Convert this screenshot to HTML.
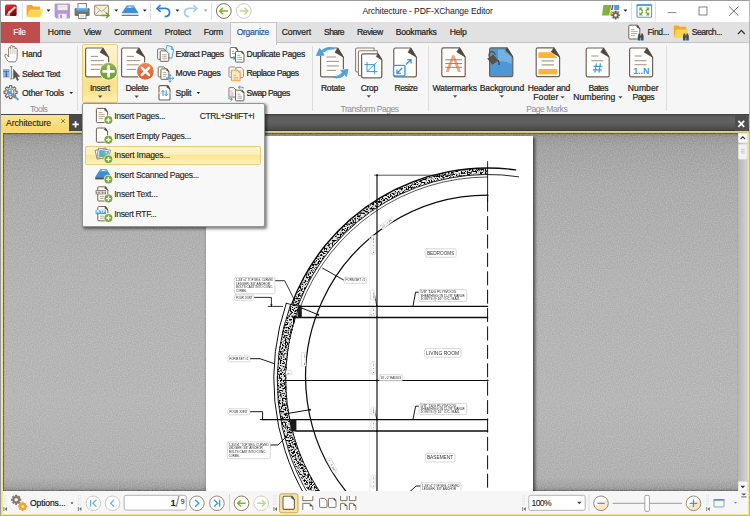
<!DOCTYPE html>
<html lang="en"><head><meta charset="utf-8"><title>Architecture - PDF-XChange Editor</title>
<style>
html,body{margin:0;padding:0;background:#fff;}
body{width:750px;height:516px;overflow:hidden;font-family:"Liberation Sans",sans-serif;}
#w{position:relative;width:750px;height:516px;overflow:hidden;background:#fff;}
#w div,#w svg{position:absolute;}
.t{-webkit-text-stroke:0.22px;white-space:pre;line-height:12px;height:12px;font-family:"Liberation Sans",sans-serif;}
.sep{width:1px;background:#dcdcdc;}
</style></head><body><div id="w">
<!-- title bar -->
<div style="left:0;top:0;width:750px;height:22px;background:#fff;"></div>
<!-- tab row -->
<div style="left:0;top:22px;width:750px;height:20px;background:#e1e1e1;"></div>
<div style="left:0;top:42px;width:750px;height:1px;background:#c4c4c4;"></div>
<div style="left:1px;top:22px;width:38.5px;height:20.5px;background:#be4d4d;"></div>
<!-- ribbon -->
<div style="left:0;top:43px;width:750px;height:71px;background:#f6f6f6;"></div>
<!-- active tab -->
<div style="left:229.5px;top:21.5px;width:45px;height:22px;background:#f6f6f6;border:1px solid #c4c4c4;border-bottom:none;box-sizing:content-box;"></div>
<!-- ribbon group separators -->
<div class="sep" style="left:77px;top:46px;height:65px;"></div>
<div class="sep" style="left:311.5px;top:46px;height:65px;"></div>
<div class="sep" style="left:428px;top:46px;height:65px;"></div>
<div class="sep" style="left:665.5px;top:46px;height:65px;"></div>
<!-- insert button active -->
<div style="left:82px;top:44px;width:36px;height:58.5px;box-sizing:border-box;border:1px solid #e8cf7e;border-radius:2px;background:linear-gradient(#fdf5d2,#fceaa6 50%,#fbe08a 68%,#fbe596 85%,#fdf0b8);"></div>
<!-- doc tab bar -->
<div style="left:0;top:114px;width:750px;height:17px;background:linear-gradient(#3f3f3f 0,#5d5d5d 2.5px,#626262 7px,#585858 12px,#4a4a4a 15.5px,#333 17px);"></div>

<!-- yellow frame -->
<div style="left:1px;top:131px;width:748px;height:384px;background:#f1e78a;"></div>
<div style="left:1px;top:131px;width:748px;height:2px;background:linear-gradient(#e6d077,#e9d47c 70%,#8a8050);"></div>
<div style="left:1px;top:115px;width:68px;height:18px;background:linear-gradient(#fbe391,#f9d870 80%,#f4dc80);"></div>
<!-- outer window border -->
<div style="left:0;top:0;width:750px;height:516px;box-sizing:border-box;border:1px solid #9c9c9c;border-right-color:#b5b5b5;border-bottom-color:#b5b5b5;z-index:50;pointer-events:none;"></div>
<!-- document area -->
<div id="doc" style="left:2.5px;top:133px;width:735.5px;height:358px;background:linear-gradient(#7c7c7c 0px,#949494 4px,#9e9e9e 14px,#a7a7a7 50px,#afafaf 150px,#b2b2b2 270px,#acacac 345px,#9c9c9c 354px,#858585 358px);overflow:hidden;box-shadow:inset 1px 1px 1px #555, inset 0 -1px 1px #6a6a6a;">
<svg style="left:0;top:0;opacity:0.5;" width="736" height="358"><filter id="grain" x="0" y="0" width="100%" height="100%"><feTurbulence type="fractalNoise" baseFrequency="0.85" numOctaves="1" seed="3"/><feColorMatrix type="matrix" values="0 0 0 0 1  0 0 0 0 1  0 0 0 0 1  0.9 0 0 0 -0.32"/></filter><rect width="736" height="358" filter="url(#grain)"/></svg>
</div>
<!-- page -->
<div style="left:206.4px;top:135.7px;width:327px;height:355.3px;background:#fff;box-shadow:1.5px 1px 3px 0.5px rgba(0,0,0,0.6);"></div>
<div style="left:2.5px;top:133px;width:735.5px;height:358px;overflow:hidden;">
<svg id="dwg" style="left:-2.5px;top:-133px;opacity:0.999;" width="750" height="516" viewBox="0 0 750 516" font-family="Liberation Sans, sans-serif">
<defs>
<clipPath id="pg"><rect x="206.4" y="135.7" width="327" height="355.3"/></clipPath>
<filter id="speck" x="0" y="0" width="100%" height="100%" filterUnits="userSpaceOnUse">
<feTurbulence type="fractalNoise" baseFrequency="0.62" numOctaves="2" seed="11" result="n"/>
<feColorMatrix in="n" type="matrix" values="0 0 0 0 0  0 0 0 0 0  0 0 0 0 0  6 0 0 0 -2.75" result="a"/>
<feComposite in="a" in2="SourceGraphic" operator="in"/>
</filter>
</defs>
<g clip-path="url(#pg)" fill="none" stroke="#0c0c0c" stroke-width="1" stroke-linecap="round">
<path d="M487.60 171.20A205.80 205.80 0 0 0 294.85 304.88" stroke="#e4e4e4" stroke-width="6.40" stroke-linecap="butt"/>
<path d="M487.60 171.20A205.80 205.80 0 0 0 294.85 304.88" stroke="#000" stroke-width="6.40" stroke-linecap="butt" filter="url(#speck)"/>
<path d="M515.70 169.90A209.00 209.00 0 0 0 291.58 304.50" stroke-width="1.3"/>
<path d="M518.60 176.79A202.60 202.60 0 0 0 297.85 306.00" stroke-width="0.9"/>
<path d="M487.60 177.00A200.00 200.00 0 0 0 300.63 306.00" stroke-width="0.7"/>
<path d="M487.60 195.00A182.00 182.00 0 0 0 349.04 495.00" stroke-width="1.25"/>
<path d="M295.50 305.20A207.10 207.10 0 0 0 317.27 496.00" stroke="#e4e4e4" stroke-width="9.4" stroke-linecap="butt"/>
<path d="M295.50 305.20A207.10 207.10 0 0 0 317.27 496.00" stroke="#000" stroke-width="9.4" stroke-linecap="butt" filter="url(#speck)"/>
<path d="M299.66 305.20A202.30 202.30 0 0 0 322.65 496.00" stroke-width="0.9"/>
<path d="M286.31 303.20A233.50 233.50 0 0 0 305.14 496.00" stroke-width="1.0"/>
<path d="M290.60 304.40A222.84 222.84 0 0 0 309.35 496.00" stroke-width="0.85"/>
<path d="M286.2 303.2L291 304.5L298 305" stroke-width="0.9"/>
<path d="M487.6 161.6V201.4" stroke-width="0.9"/>
<path d="M487.6 197.7V495" stroke-width="1" stroke-dasharray="14 4.4" stroke-linecap="butt"/>
<path d="M374.5 175.2H452" stroke-width="0.7"/>
<path d="M377 175.2V495" stroke-width="1.15"/>
<path d="M369.6 175.2V495" stroke="#e4e4e4" stroke-width="0.6"/>
<path d="M299.8 306.4H487.6M294.4 317.5H487.6" stroke-width="1.4"/>
<path d="M285 380.5H487.6" stroke-width="1.2"/>
<path d="M262.6 419.6H487.6M296 431H487.6" stroke-width="1.4"/>
<rect x="297.6" y="305.6" width="4.2" height="12" fill="#1a1a1a" stroke="none"/>
<rect x="290.4" y="419" width="6" height="12.4" fill="#1a1a1a" stroke="none"/>
<path d="M301.8 308L318.2 314.8" stroke-width="1"/><circle cx="318.2" cy="314.8" r="1" fill="#111" stroke="none"/>
<path d="M284.3 414L310 409.7" stroke-width="1"/><circle cx="310" cy="409.7" r="1" fill="#111" stroke="none"/>
<circle cx="377" cy="175.2" r="1" fill="#111" stroke="none"/>
<circle cx="377" cy="306.2" r="1" fill="#111" stroke="none"/>
<circle cx="377" cy="317.2" r="1" fill="#111" stroke="none"/>
<circle cx="377" cy="380.5" r="1" fill="#111" stroke="none"/>
<circle cx="377" cy="419.6" r="1" fill="#111" stroke="none"/>
<circle cx="377" cy="431" r="1" fill="#111" stroke="none"/>
<circle cx="487.6" cy="195.4" r="0.9" fill="#111" stroke="none"/>
<circle cx="487.6" cy="380.5" r="1" fill="#111" stroke="none"/>
<path d="M344 280.2L322.6 268.2" stroke-width="0.95"/>
<path d="M274.9 280.7H284.7L296 303" stroke-width="0.85"/>
<path d="M254 297.4H271.4V306.3M268.2 306.4H282.6" stroke-width="0.85"/><path d="M270.2 304.2H272.6L271.4 306.3Z" fill="#111" stroke="none"/>
<path d="M419 292.2H415.6L413 306" stroke-width="0.95"/>
<path d="M419 406.2H415.6L413 419.4" stroke-width="0.95"/>
<path d="M420.5 486H416L409.5 492" stroke-width="0.95"/>
<path d="M250 358.7H260L273.8 363.5" stroke-width="0.95"/>
<path d="M250 411.7H262.6V419.6M260.2 419.6H265" stroke-width="0.95"/>
<path d="M270.3 445H278L288.4 434.6" stroke-width="0.95"/>
<path d="M374.5 295L376.8 305.5" stroke-width="0.7"/>
<path d="M374.5 410L376.8 419" stroke-width="0.7"/>
<rect x="425.3" y="248.8" width="30.9" height="8.4" rx="1.6" fill="#fff" stroke="#bdbdbd" stroke-width="0.6"/><text x="426.9" y="254.62" font-size="4.5" fill="#333" stroke="none" textLength="27.5" lengthAdjust="spacingAndGlyphs">BEDROOMS</text>
<rect x="424.4" y="348.6" width="36.6" height="8.6" rx="1.6" fill="#fff" stroke="#bdbdbd" stroke-width="0.6"/><text x="426.0" y="354.52" font-size="4.5" fill="#333" stroke="none" textLength="33.2" lengthAdjust="spacingAndGlyphs">LIVING ROOM</text>
<rect x="425.3" y="453.3" width="29.7" height="8.7" rx="1.6" fill="#fff" stroke="#bdbdbd" stroke-width="0.6"/><text x="426.9" y="459.27" font-size="4.5" fill="#333" stroke="none" textLength="26.3" lengthAdjust="spacingAndGlyphs">BASEMENT</text>
<rect x="344.0" y="277.3" width="22.8" height="6.0" rx="1.6" fill="#fff" stroke="#bdbdbd" stroke-width="0.6"/><text x="345.6" y="281.31" font-size="2.8" fill="#222" stroke="none" textLength="19.6" lengthAdjust="spacingAndGlyphs">FORM SET #1</text>
<rect x="234.4" y="277.5" width="40.5" height="16.2" rx="1.6" fill="#fff" stroke="#bdbdbd" stroke-width="0.6"/><text x="236.0" y="281.13" font-size="2.8" fill="#222" stroke="none" textLength="37.3" lengthAdjust="spacingAndGlyphs">1-3/4"x1" TOP SEG. CURVED</text><text x="236.0" y="284.78" font-size="2.8" fill="#222" stroke="none" textLength="34.0" lengthAdjust="spacingAndGlyphs">LEDGER; 3/8" ANCHOR</text><text x="236.0" y="288.43" font-size="2.8" fill="#222" stroke="none" textLength="37.3" lengthAdjust="spacingAndGlyphs">BOLTS CAST INTO CONC.</text><text x="236.0" y="292.08" font-size="2.8" fill="#222" stroke="none" textLength="10.8" lengthAdjust="spacingAndGlyphs">CORBEL</text>
<rect x="234.4" y="295.0" width="19.6" height="5.3" rx="1.6" fill="#fff" stroke="#bdbdbd" stroke-width="0.6"/><text x="236.0" y="298.66" font-size="2.8" fill="#222" stroke="none" textLength="16.4" lengthAdjust="spacingAndGlyphs">POUR JOINT</text>
<rect x="418.9" y="289.6" width="47.9" height="11.9" rx="1.6" fill="#fff" stroke="#bdbdbd" stroke-width="0.6"/><text x="420.5" y="293.12" font-size="2.8" fill="#222" stroke="none" textLength="35.8" lengthAdjust="spacingAndGlyphs">5/8" T&amp;G PLYWOOD</text><text x="420.5" y="296.56" font-size="2.8" fill="#222" stroke="none" textLength="44.7" lengthAdjust="spacingAndGlyphs">SHEATHING ON 11-7/8" MANUF.</text><text x="420.5" y="299.99" font-size="2.8" fill="#222" stroke="none" textLength="39.4" lengthAdjust="spacingAndGlyphs">JOISTS @ 16" O.C. MAX.</text>
<rect x="418.9" y="403.4" width="47.9" height="11.2" rx="1.6" fill="#fff" stroke="#bdbdbd" stroke-width="0.6"/><text x="420.5" y="406.81" font-size="2.8" fill="#222" stroke="none" textLength="35.8" lengthAdjust="spacingAndGlyphs">5/8" T&amp;G PLYWOOD</text><text x="420.5" y="410.01" font-size="2.8" fill="#222" stroke="none" textLength="44.7" lengthAdjust="spacingAndGlyphs">SHEATHING ON 11-7/8" MANUF.</text><text x="420.5" y="413.21" font-size="2.8" fill="#222" stroke="none" textLength="39.4" lengthAdjust="spacingAndGlyphs">JOISTS @ 16" O.C. MAX.</text>
<rect x="420.5" y="482.8" width="40.5" height="13.2" rx="1.6" fill="#fff" stroke="#bdbdbd" stroke-width="0.6"/><text x="422.1" y="486.54" font-size="2.8" fill="#222" stroke="none" textLength="37.3" lengthAdjust="spacingAndGlyphs">1-3/4"x1" TOP SEG. CURVED</text><text x="422.1" y="490.41" font-size="2.8" fill="#222" stroke="none" textLength="34.0" lengthAdjust="spacingAndGlyphs">LEDGER; 3/8" ANCHOR</text><text x="422.1" y="494.27" font-size="2.8" fill="#222" stroke="none" textLength="9.0" lengthAdjust="spacingAndGlyphs">BOLTS</text>
<rect x="379.0" y="374.8" width="23.7" height="6.0" rx="1.6" fill="#fff" stroke="#bdbdbd" stroke-width="0.6"/><text x="380.6" y="378.81" font-size="2.8" fill="#222" stroke="none" textLength="20.5" lengthAdjust="spacingAndGlyphs">18' - 0" RADIUS</text>
<rect x="228.0" y="355.8" width="22.0" height="6.0" rx="1.6" fill="#fff" stroke="#bdbdbd" stroke-width="0.6"/><text x="229.6" y="359.81" font-size="2.8" fill="#222" stroke="none" textLength="18.8" lengthAdjust="spacingAndGlyphs">FORM SET #2</text>
<rect x="228.0" y="408.8" width="22.0" height="6.0" rx="1.6" fill="#fff" stroke="#bdbdbd" stroke-width="0.6"/><text x="229.6" y="412.81" font-size="2.8" fill="#222" stroke="none" textLength="17.9" lengthAdjust="spacingAndGlyphs">POUR JOINT</text>
<rect x="227.2" y="441.9" width="43.1" height="16.8" rx="1.6" fill="#fff" stroke="#bdbdbd" stroke-width="0.6"/><text x="228.8" y="445.61" font-size="2.8" fill="#222" stroke="none" textLength="39.9" lengthAdjust="spacingAndGlyphs">1-3/4"x1" TOP SEG. CURVED</text><text x="228.8" y="449.41" font-size="2.8" fill="#222" stroke="none" textLength="34.0" lengthAdjust="spacingAndGlyphs">LEDGER; 3/8" ANCHOR</text><text x="228.8" y="453.21" font-size="2.8" fill="#222" stroke="none" textLength="37.6" lengthAdjust="spacingAndGlyphs">BOLTS CAST INTO CONC.</text><text x="228.8" y="457.01" font-size="2.8" fill="#222" stroke="none" textLength="10.8" lengthAdjust="spacingAndGlyphs">CORBEL</text>
<g transform="translate(387 223) rotate(-40)"><rect x="-7.5" y="-2.3" width="15" height="4.6" rx="1.3" fill="#fff" stroke="#c4c4c4" stroke-width="0.5"/><text x="-6.3" y="0.9" font-size="2.5" fill="#333" stroke="none" textLength="12.6" lengthAdjust="spacingAndGlyphs">20' - 0 3/8"</text></g>
<g transform="translate(373.2 245) rotate(-90)"><rect x="-9.5" y="-2.1" width="19" height="4.2" rx="1.3" fill="#fff" stroke="#c4c4c4" stroke-width="0.5"/><text x="-8.3" y="0.9" font-size="2.5" fill="#333" stroke="none" textLength="16.6" lengthAdjust="spacingAndGlyphs">1' - 7 3/8"</text></g>
<g transform="translate(372.6 295) rotate(-90)"><rect x="-5.0" y="-2.1" width="10" height="4.2" rx="1.3" fill="#fff" stroke="#c4c4c4" stroke-width="0.5"/><text x="-3.8" y="0.9" font-size="2.5" fill="#333" stroke="none" textLength="7.6" lengthAdjust="spacingAndGlyphs">3/4"</text></g>
<g transform="translate(373.2 311.8) rotate(-90)"><rect x="-4.0" y="-2.1" width="8" height="4.2" rx="1.3" fill="#fff" stroke="#c4c4c4" stroke-width="0.5"/><text x="-2.8" y="0.9" font-size="2.5" fill="#333" stroke="none" textLength="5.6" lengthAdjust="spacingAndGlyphs">1' - 0"</text></g>
<g transform="translate(373.2 368) rotate(-90)"><rect x="-6.5" y="-2.1" width="13" height="4.2" rx="1.3" fill="#fff" stroke="#c4c4c4" stroke-width="0.5"/><text x="-5.3" y="0.9" font-size="2.5" fill="#333" stroke="none" textLength="10.6" lengthAdjust="spacingAndGlyphs">8' - 0 1/2"</text></g>
<g transform="translate(373.2 411) rotate(-90)"><rect x="-4.0" y="-2.1" width="8" height="4.2" rx="1.3" fill="#fff" stroke="#c4c4c4" stroke-width="0.5"/><text x="-2.8" y="0.9" font-size="2.5" fill="#333" stroke="none" textLength="5.6" lengthAdjust="spacingAndGlyphs">3/4"</text></g>
<g transform="translate(373.2 425.3) rotate(-90)"><rect x="-4.0" y="-2.1" width="8" height="4.2" rx="1.3" fill="#fff" stroke="#c4c4c4" stroke-width="0.5"/><text x="-2.8" y="0.9" font-size="2.5" fill="#333" stroke="none" textLength="5.6" lengthAdjust="spacingAndGlyphs">1' - 0"</text></g>
<g transform="translate(373.2 481.5) rotate(-90)"><rect x="-6.5" y="-2.1" width="13" height="4.2" rx="1.3" fill="#fff" stroke="#c4c4c4" stroke-width="0.5"/><text x="-5.3" y="0.9" font-size="2.5" fill="#333" stroke="none" textLength="10.6" lengthAdjust="spacingAndGlyphs">8' - 0 1/2"</text></g>
<g transform="translate(303.6 359.5) rotate(-90)"><rect x="-7.0" y="-2.2" width="14" height="4.4" rx="1.3" fill="#fff" stroke="#c4c4c4" stroke-width="0.5"/><text x="-5.8" y="0.9" font-size="2.5" fill="#333" stroke="none" textLength="11.6" lengthAdjust="spacingAndGlyphs">6' - 0"</text></g>
<g transform="translate(288.8 372.6) rotate(0)"><rect x="-3.0" y="-2.2" width="6" height="4.4" rx="1.3" fill="#fff" stroke="#c4c4c4" stroke-width="0.5"/><text x="-1.8" y="0.9" font-size="2.5" fill="#333" stroke="none" textLength="3.6" lengthAdjust="spacingAndGlyphs">1"</text></g>
<g transform="translate(332 465.5) rotate(62)"><rect x="-8.0" y="-2.3" width="16" height="4.6" rx="1.3" fill="#fff" stroke="#c4c4c4" stroke-width="0.5"/><text x="-6.8" y="0.9" font-size="2.5" fill="#333" stroke="none" textLength="13.6" lengthAdjust="spacingAndGlyphs">7' - 1 1/4"</text></g>
</g>
</svg>
</div>
<!-- scrollbar -->
<div style="left:738px;top:133px;width:9.5px;height:358px;background:linear-gradient(90deg,#b4b4b4,#d6d6d6);"></div>
<svg style="left:0;top:0;" width="750" height="516" viewBox="0 0 750 516">
<defs><linearGradient id="ag" x1="0" y1="0" x2="0.6" y2="1"><stop offset="0" stop-color="#e8323a"/><stop offset="0.55" stop-color="#b31820"/><stop offset="1" stop-color="#6e0c10"/></linearGradient></defs>
<rect x="5" y="4.6" width="11.6" height="11.4" rx="1.6" fill="url(#ag)"/>
<path d="M7.4 14.2L8.6 11.4L14.6 6.2L16 7.8L10.2 13.2Z" fill="#fff"/><path d="M9.6 11.2L14.8 6.8M10.6 12.2L15.6 7.8" stroke="#c44" stroke-width="0.5"/><path d="M5.6 15.6L9 12.4L10.4 15.8Z" fill="#e8c8c8" opacity="0.9"/>

<path d="M22.3 2.5V20" stroke="#dcdcdc" stroke-width="1"/>
<path d="M150.6 2.5V20" stroke="#dcdcdc" stroke-width="1"/>
<path d="M211.4 2.5V20" stroke="#dcdcdc" stroke-width="1"/>
<path d="M631.6 2.5V20" stroke="#dcdcdc" stroke-width="1"/>
<path d="M655.4 2.5V20" stroke="#dcdcdc" stroke-width="1"/>
<path d="M26.6 6.2Q26.6 5 27.8 5H32L33.4 6.6H39Q40.2 6.6 40.2 7.8V16.4H26.6Z" fill="#f8a623"/>
<path d="M29.4 9.4H43.2L40.4 17H26.8Z" fill="#fdd655"/><path d="M30 10.2H42L41.7 11H29.7Z" fill="#fee58c"/>
<path d="M46.50 9.55H50.50L48.50 11.85Z" fill="#222"/>
<path d="M54.6 4.6Q54.6 3.6 55.6 3.6H69Q70 3.6 70 4.6V17.6Q70 18.6 69 18.6H56.4L54.6 16.8Z" fill="#b497d6"/>
<rect x="57.6" y="4.8" width="10" height="5.4" fill="#efefe4"/><path d="M58.6 6.8H66.6" stroke="#d9d9cc" stroke-width="0.8"/>
<rect x="58.4" y="13.8" width="8.2" height="4.8" fill="#f4f0fa"/><rect x="60" y="14.6" width="2" height="3.4" fill="#b497d6"/>
<rect x="78" y="3.6" width="8.4" height="5" fill="#fff" stroke="#7d6e60" stroke-width="0.9"/>
<rect x="74.6" y="8" width="15" height="8" rx="1.2" fill="#7d6e60"/><rect x="76.4" y="8" width="11.6" height="3.6" fill="#4a9fe0"/><rect x="76.4" y="8" width="11.6" height="1.4" fill="#78bcee"/>
<rect x="78.4" y="13.6" width="7.6" height="5" fill="#fff" stroke="#7d6e60" stroke-width="0.9"/><rect x="80" y="15" width="4.4" height="2.4" fill="#cfe8f6"/>
<rect x="94.6" y="5.2" width="14" height="10.2" rx="0.8" fill="#f7efd6" stroke="#8a7b6a" stroke-width="0.9"/><path d="M95 5.8L101.6 11.6L108.2 5.8M95 15L99.8 10.2M108.2 15L103.4 10.2" stroke="#a89a88" stroke-width="0.8" fill="none"/>
<path d="M101.4 15.4H108.4M106.2 12.8L109 15.4L106.2 18" stroke="#6aa820" stroke-width="1.5" fill="none"/>
<path d="M114.50 9.55H118.10L116.30 11.65Z" fill="#222"/>
<path d="M126.6 5.6H133.8L138.6 13.2H121.6Z" fill="#3f8fd6"/><path d="M126.8 5.8H133.6L135 8H125.4Z" fill="#6fb2ea"/><rect x="128.4" y="6.8" width="3" height="1" rx="0.5" fill="#fff"/>
<rect x="121.6" y="13.6" width="17" height="2" fill="#efe6da"/><path d="M121.6 15.4H138.6" stroke="#7d6e60" stroke-width="1.1"/>
<path d="M143.00 9.55H146.60L144.80 11.65Z" fill="#222"/>
<path d="M158.4 8.4H165.4Q169.6 8.8 169.6 12.6Q169.4 16.4 164.6 16.6" stroke="#2f7fd2" stroke-width="1.7" fill="none"/><path d="M160.6 5L157 8.4L160.6 11.8" stroke="#2f7fd2" stroke-width="1.7" fill="none"/>
<path d="M175.60 9.55H179.20L177.40 11.65Z" fill="#222"/>
<path d="M195.4 8.4H188.6Q184.6 8.8 184.6 12.6Q184.8 16.4 189.4 16.6" stroke="#a2cdf0" stroke-width="1.7" fill="none"/><path d="M193.4 5L197 8.4L193.4 11.8" stroke="#a2cdf0" stroke-width="1.7" fill="none"/>
<path d="M203.80 9.55H207.40L205.60 11.65Z" fill="#9a9a9a"/>
<circle cx="223.8" cy="11" r="7.4" fill="#fff" stroke="#7f7152" stroke-width="1"/><path d="M228 11H220M223 7.8L219.8 11L223 14.2" stroke="#7ab51d" stroke-width="1.5" fill="none"/>
<circle cx="243.8" cy="11" r="7.4" fill="#fff" stroke="#cfc8ba" stroke-width="1"/><path d="M239.6 11H247.6M244.6 7.8L247.8 11L244.6 14.2" stroke="#b7d98a" stroke-width="1.5" fill="none"/>
<path d="M603.4 5H611.6L609 15.6H602Z" fill="#7fb241"/><path d="M612.2 5H613.6L612.6 10H611Z" fill="#7a4aa8"/><rect x="614.2" y="5" width="5" height="5" fill="#4a9fe0"/><path d="M610.8 11H612.6L611.6 15.6H609.8Z" fill="#f7a428"/><rect x="614.2" y="10.6" width="5" height="1.6" fill="#f3b27a"/>
<path d="M619.74 14.51L619.74 15.89L618.51 15.92L618.17 16.75L619.02 17.64L618.04 18.62L617.15 17.77L616.32 18.11L616.29 19.34L614.91 19.34L614.88 18.11L614.05 17.77L613.16 18.62L612.18 17.64L613.03 16.75L612.69 15.92L611.46 15.89L611.46 14.51L612.69 14.48L613.03 13.65L612.18 12.76L613.16 11.78L614.05 12.63L614.88 12.29L614.91 11.06L616.29 11.06L616.32 12.29L617.15 12.63L618.04 11.78L619.02 12.76L618.17 13.65L618.51 14.48Z" fill="#6f6254" stroke="#6f6254" stroke-width="0.4" stroke-linejoin="round"/><circle cx="615.6" cy="15.2" r="1.5" fill="#fff" stroke="#6f6254" stroke-width="0.32000000000000006"/>
<path d="M623.50 9.50H627.30L625.40 11.70Z" fill="#222"/>
<rect x="637" y="5" width="14.6" height="12.2" rx="1" fill="#fff" stroke="#4a9fe0" stroke-width="1.1"/><rect x="636.5" y="4.2" width="15.6" height="1.8" fill="#4a9fe0"/>
<path d="M640.5 8.799999999999999L642.8 11.1" stroke="#76ab33" stroke-width="1.5"/><path d="M642.8 7.6H639.3V11.1Z" fill="#76ab33"/>
<path d="M648.0999999999999 8.799999999999999L645.8 11.1" stroke="#76ab33" stroke-width="1.5"/><path d="M645.8 7.6H649.3V11.1Z" fill="#76ab33"/>
<path d="M640.5 14.200000000000001L642.8 11.9" stroke="#76ab33" stroke-width="1.5"/><path d="M642.8 15.4H639.3V11.9Z" fill="#76ab33"/>
<path d="M648.0999999999999 14.200000000000001L645.8 11.9" stroke="#76ab33" stroke-width="1.5"/><path d="M645.8 15.4H649.3V11.9Z" fill="#76ab33"/>
<path d="M667.6 12.6H676.4" stroke="#7a7a7a" stroke-width="0.9"/>
<rect x="699" y="7" width="8" height="8" fill="none" stroke="#757575" stroke-width="0.9"/>
<path d="M729.2 6.6L738.4 15.6M738.4 6.6L729.2 15.6" stroke="#5a5a5a" stroke-width="0.9"/>
<path d="M629.79 25.20H637.57L639.80 28.80V38.01Q639.80 39.00 638.81 39.00H629.79Q628.80 39.00 628.80 38.01V26.19Q628.80 25.20 629.79 25.20Z" fill="#fff" stroke="#6f6254" stroke-width="1" stroke-linejoin="round"/><path d="M637.57 25.20L639.80 28.80L636.49 26.86Z" fill="#54483c" stroke="#54483c" stroke-width="0.50" stroke-linejoin="round"/><path d="M631.00 29.60H634.60" stroke="#ad9e8a" stroke-width="0.9" fill="none"/><path d="M631.00 31.60H637.40" stroke="#ad9e8a" stroke-width="0.9" fill="none"/><path d="M631.00 33.60H637.40" stroke="#ad9e8a" stroke-width="0.9" fill="none"/><path d="M631.00 35.60H635.00" stroke="#ad9e8a" stroke-width="0.9" fill="none"/>
<path d="M637.8000000000001 40.2V36L638.6 33.6H640.0L640.4000000000001 36V40.2Z M641.0 40.2V36L641.4000000000001 33.6H642.8000000000001L643.6 36V40.2Z" fill="#4b4b4b"/><rect x="640.0" y="35.6" width="1.4" height="2" fill="#4b4b4b"/><path d="M638.0 40.4H640.2M641.2 40.4H643.4000000000001" stroke="#4a9fe0" stroke-width="0.9"/>
<path d="M673.8 26.4Q673.8 25.4 674.8 25.4H678.4L679.6 26.8H685.4Q686.4 26.8 686.4 27.8V37.2H673.8Z" fill="#f8a623"/><path d="M676 29.6H688.6L686.2 37.4H673.9Z" fill="#fdd655"/>
<path d="M683.0 40.2V36L683.8 33.6H685.1999999999999L685.6 36V40.2Z M686.1999999999999 40.2V36L686.6 33.6H688.0L688.8 36V40.2Z" fill="#4b4b4b"/><rect x="685.1999999999999" y="35.6" width="1.4" height="2" fill="#4b4b4b"/><path d="M683.1999999999999 40.4H685.4M686.4 40.4H688.6" stroke="#4a9fe0" stroke-width="0.9"/>
<path d="M738 34L741.4 30.4L744.8 34" stroke="#333" stroke-width="1.3" fill="none"/>
<path d="M61.4 119.2L64.8 122.8M64.8 119.2L61.4 122.8" stroke="#555" stroke-width="0.8"/>
<rect x="69" y="115" width="12.4" height="16" fill="#4a4a4a"/><path d="M75.6 121.2V127.6M72.4 124.4H78.8" stroke="#fff" stroke-width="1.7"/>
<rect x="735" y="115" width="13" height="16" fill="#4e4e4e"/><path d="M738.4 120.8L744.2 126.8M744.2 120.8L738.4 126.8" stroke="#fff" stroke-width="1.7"/>
</svg>
<svg style="left:0;top:0;" width="750" height="516" viewBox="0 0 750 516">
<defs><linearGradient id="gl" x1="0" y1="0" x2="0" y2="1"><stop offset="0" stop-color="#fff" stop-opacity="0.18"/><stop offset="1" stop-color="#000" stop-opacity="0.06"/></linearGradient></defs>
<path d="M87.20 48.00H102.83L108.60 57.30V75.20Q108.60 76.80 107.00 76.80H87.20Q85.60 76.80 85.60 75.20V49.60Q85.60 48.00 87.20 48.00Z" fill="#fff" stroke="#6f6254" stroke-width="1.2" stroke-linejoin="round"/><path d="M102.83 48.00L108.60 57.30L100.04 52.28Z" fill="#54483c" stroke="#54483c" stroke-width="0.60" stroke-linejoin="round"/><path d="M90.80 56.40H98.00" stroke="#ad9e8a" stroke-width="1.15" fill="none"/><path d="M90.80 60.60H104.00" stroke="#ad9e8a" stroke-width="1.15" fill="none"/><path d="M90.80 64.80H104.00" stroke="#ad9e8a" stroke-width="1.15" fill="none"/><path d="M90.80 69.40H100.00" stroke="#ad9e8a" stroke-width="1.15" fill="none"/>
<circle cx="108.6" cy="71.4" r="9.2" fill="#f7f0d0"/><circle cx="108.6" cy="71.4" r="8.3" fill="#7aad38"/><circle cx="108.6" cy="71.4" r="8.3" fill="url(#gl)"/>
<path d="M108.6 66.4V76.4M103.6 71.4H113.6" stroke="#fff" stroke-width="2.7" stroke-linecap="round"/>
<path d="M97.90 95.60H102.30L100.10 98.00Z" fill="#505050"/>
<path d="M123.20 48.00H138.83L144.60 57.30V75.20Q144.60 76.80 143.00 76.80H123.20Q121.60 76.80 121.60 75.20V49.60Q121.60 48.00 123.20 48.00Z" fill="#fff" stroke="#6f6254" stroke-width="1.2" stroke-linejoin="round"/><path d="M138.83 48.00L144.60 57.30L136.04 52.28Z" fill="#54483c" stroke="#54483c" stroke-width="0.60" stroke-linejoin="round"/><path d="M126.80 56.40H134.00" stroke="#ad9e8a" stroke-width="1.15" fill="none"/><path d="M126.80 60.60H140.00" stroke="#ad9e8a" stroke-width="1.15" fill="none"/><path d="M126.80 64.80H139.00" stroke="#ad9e8a" stroke-width="1.15" fill="none"/><path d="M126.80 69.40H136.00" stroke="#ad9e8a" stroke-width="1.15" fill="none"/>
<circle cx="145.4" cy="71.4" r="9.2" fill="#f9f3ee"/><circle cx="145.4" cy="71.4" r="8.3" fill="#f26c38"/><circle cx="145.4" cy="71.4" r="8.3" fill="url(#gl)"/>
<path d="M141.9 67.9L148.9 74.9M148.9 67.9L141.9 74.9" stroke="#fff" stroke-width="2.7" stroke-linecap="round"/>
<path d="M134.40 95.60H138.80L136.60 98.00Z" fill="#505050"/>
<g transform="rotate(12 169 52)"><path d="M165.6 46H170.4L173 48.8V57.6H165.6Z" fill="#f2f8fe" stroke="#4aa3e8" stroke-width="0.95" stroke-linejoin="round"/><path d="M170.4 46V48.8H173" fill="none" stroke="#4aa3e8" stroke-width="0.8"/></g>
<path d="M158.41 48.90H164.00L166.60 51.50V58.49Q166.60 59.30 165.79 59.30H158.41Q157.60 59.30 157.60 58.49V49.71Q157.60 48.90 158.41 48.90Z" fill="#fff" stroke="#6f6254" stroke-width="0.9" stroke-linejoin="round"/>
<path d="M160.97 50.90H166.20L168.80 53.50V60.53Q168.80 61.30 168.03 61.30H160.97Q160.20 61.30 160.20 60.53V51.67Q160.20 50.90 160.97 50.90Z" fill="#fff" stroke="#6f6254" stroke-width="1" stroke-linejoin="round"/><path d="M162.20 54.80H166.80" stroke="#ad9e8a" stroke-width="0.9" fill="none"/><path d="M162.20 56.80H166.80" stroke="#ad9e8a" stroke-width="0.9" fill="none"/><path d="M162.20 58.80H166.80" stroke="#ad9e8a" stroke-width="0.9" fill="none"/>
<path d="M158.92 66.90H163.80L166.20 69.30V76.18Q166.20 76.90 165.48 76.90H158.92Q158.20 76.90 158.20 76.18V67.62Q158.20 66.90 158.92 66.90Z" fill="#fff" stroke="#6f6254" stroke-width="0.9" stroke-linejoin="round"/>
<path d="M161.62 68.90H167.16L168.90 71.70V78.58Q168.90 79.30 168.18 79.30H161.62Q160.90 79.30 160.90 78.58V69.62Q160.90 68.90 161.62 68.90Z" fill="#fff" stroke="#6f6254" stroke-width="1" stroke-linejoin="round"/><path d="M167.16 68.90L168.90 71.70L166.32 70.19Z" fill="#54483c" stroke="#54483c" stroke-width="0.50" stroke-linejoin="round"/><path d="M162.80 72.60H165.80" stroke="#ad9e8a" stroke-width="0.9" fill="none"/><path d="M162.80 74.60H166.60" stroke="#ad9e8a" stroke-width="0.9" fill="none"/><path d="M162.80 76.60H165.80" stroke="#ad9e8a" stroke-width="0.9" fill="none"/>
<path d="M170 74.8V81.8M166.5 78.3H173.5" stroke="#3f97dc" stroke-width="0.9" fill="none"/><path d="M168.8 76L170 74.4L171.2 76M168.8 80.6L170 82.2L171.2 80.6M167.7 77.1L166.1 78.3L167.7 79.5M172.3 77.1L173.9 78.3L172.3 79.5" stroke="#3f97dc" stroke-width="0.9" fill="none"/>
<path d="M159.99 85.60H167.77L170.00 89.20V99.01Q170.00 100.00 169.01 100.00H159.99Q159.00 100.00 159.00 99.01V86.59Q159.00 85.60 159.99 85.60Z" fill="#fff" stroke="#6f6254" stroke-width="1.1" stroke-linejoin="round"/><path d="M167.77 85.60L170.00 89.20L166.69 87.26Z" fill="#54483c" stroke="#54483c" stroke-width="0.55" stroke-linejoin="round"/>
<path d="M157.6 93H171.6" stroke="#e8d9b8" stroke-width="1.2"/>
<path d="M163 96V90.6M161.6 92L163 90.4L164.4 92M166.2 90.2V95.6M164.8 94.2L166.2 95.8L167.6 94.2" stroke="#3f97dc" stroke-width="1" fill="none"/>
<path d="M196.50 92.10H200.10L198.30 94.10Z" fill="#222"/>
<path d="M230.87 47.50H236.11L237.60 49.90V56.83Q237.60 57.50 236.93 57.50H230.87Q230.20 57.50 230.20 56.83V48.17Q230.20 47.50 230.87 47.50Z" fill="#fff" stroke="#6f6254" stroke-width="0.9" stroke-linejoin="round"/><path d="M236.11 47.50L237.60 49.90L235.39 48.60Z" fill="#54483c" stroke="#54483c" stroke-width="0.45" stroke-linejoin="round"/><path d="M232.00 51.50H234.00" stroke="#ad9e8a" stroke-width="0.9" fill="none"/><path d="M232.00 53.50H235.40" stroke="#ad9e8a" stroke-width="0.9" fill="none"/>
<path d="M236.26 51.50H242.26L244.00 54.30V61.34Q244.00 62.10 243.24 62.10H236.26Q235.50 62.10 235.50 61.34V52.27Q235.50 51.50 236.26 51.50Z" fill="#fff" stroke="#6f6254" stroke-width="1" stroke-linejoin="round"/><path d="M242.26 51.50L244.00 54.30L241.42 52.79Z" fill="#54483c" stroke="#54483c" stroke-width="0.50" stroke-linejoin="round"/><path d="M237.40 55.40H240.40" stroke="#ad9e8a" stroke-width="0.9" fill="none"/><path d="M237.40 57.40H242.00" stroke="#ad9e8a" stroke-width="0.9" fill="none"/><path d="M237.40 59.40H242.00" stroke="#ad9e8a" stroke-width="0.9" fill="none"/>
<path d="M230.6 58H235M233.6 56.4L235.2 58L233.6 59.6" stroke="#3f97dc" stroke-width="1.1" fill="none"/>
<path d="M229.72 67.00H234.60L237.00 69.40V76.28Q237.00 77.00 236.28 77.00H229.72Q229.00 77.00 229.00 76.28V67.72Q229.00 67.00 229.72 67.00Z" fill="#fff" stroke="#8a8077" stroke-width="0.9" stroke-linejoin="round"/><path d="M230.60 70.50H233.00" stroke="#ad9e8a" stroke-width="0.9" fill="none"/><path d="M230.60 72.50H234.00" stroke="#ad9e8a" stroke-width="0.9" fill="none"/><path d="M230.60 74.50H234.00" stroke="#ad9e8a" stroke-width="0.9" fill="none"/>
<path d="M236.67 67.40H241.00L243.40 69.80V76.73Q243.40 77.40 242.73 77.40H236.67Q236.00 77.40 236.00 76.73V68.07Q236.00 67.40 236.67 67.40Z" fill="#fff" stroke="#8a8077" stroke-width="0.9" stroke-linejoin="round"/><path d="M238.60 71.00H241.60" stroke="#ad9e8a" stroke-width="0.9" fill="none"/><path d="M238.60 73.00H241.60" stroke="#ad9e8a" stroke-width="0.9" fill="none"/><path d="M238.60 75.00H241.60" stroke="#ad9e8a" stroke-width="0.9" fill="none"/>
<path d="M232.27 70.20H237.30L240.10 73.00V80.03Q240.10 80.80 239.33 80.80H232.27Q231.50 80.80 231.50 80.03V70.97Q231.50 70.20 232.27 70.20Z" fill="#fdeccd" stroke="#f2a33a" stroke-width="1.1" stroke-linejoin="round"/>
<path d="M233.6 75.4H236.4M233.6 77.4H238M233.6 79H238" stroke="#f2a33a" stroke-width="0.8"/>
<path d="M229.61 87.60H233.60L235.80 89.80V96.39Q235.80 97.00 235.19 97.00H229.61Q229.00 97.00 229.00 96.39V88.21Q229.00 87.60 229.61 87.60Z" fill="#fff" stroke="#6f6254" stroke-width="0.9" stroke-linejoin="round"/><path d="M230.60 91.00H232.40" stroke="#ad9e8a" stroke-width="0.9" fill="none"/><path d="M230.60 93.00H233.60" stroke="#ad9e8a" stroke-width="0.9" fill="none"/><path d="M230.60 95.00H233.60" stroke="#ad9e8a" stroke-width="0.9" fill="none"/>
<path d="M236.26 90.20H242.26L244.00 93.00V100.03Q244.00 100.80 243.24 100.80H236.26Q235.50 100.80 235.50 100.03V90.97Q235.50 90.20 236.26 90.20Z" fill="#fff" stroke="#6f6254" stroke-width="1" stroke-linejoin="round"/><path d="M242.26 90.20L244.00 93.00L241.42 91.49Z" fill="#54483c" stroke="#54483c" stroke-width="0.50" stroke-linejoin="round"/><path d="M237.40 94.20H240.40" stroke="#ad9e8a" stroke-width="0.9" fill="none"/><path d="M237.40 96.20H242.00" stroke="#ad9e8a" stroke-width="0.9" fill="none"/><path d="M237.40 98.20H242.00" stroke="#ad9e8a" stroke-width="0.9" fill="none"/>
<path d="M244 88.2Q241.5 86.4 238.6 87.2M240.2 85.6L238.4 87.3L240.4 88.8" stroke="#3f97dc" stroke-width="1" fill="none"/>
<path d="M228.2 97.4Q228.6 99.6 232 99.4M230.6 97.8L232.4 99.4L230.6 101" stroke="#3f97dc" stroke-width="1" fill="none"/>
<path d="M322.20 48.00H337.70L343.40 57.20V75.20Q343.40 76.80 341.80 76.80H322.20Q320.60 76.80 320.60 75.20V49.60Q320.60 48.00 322.20 48.00Z" fill="#fff" stroke="#6f6254" stroke-width="1.2" stroke-linejoin="round"/><path d="M337.70 48.00L343.40 57.20L334.94 52.23Z" fill="#54483c" stroke="#54483c" stroke-width="0.60" stroke-linejoin="round"/><path d="M326.60 57.00H336.00" stroke="#ad9e8a" stroke-width="1.15" fill="none"/><path d="M326.60 61.40H339.00" stroke="#ad9e8a" stroke-width="1.15" fill="none"/><path d="M326.60 65.90H339.00" stroke="#ad9e8a" stroke-width="1.15" fill="none"/><path d="M326.60 70.40H337.00" stroke="#ad9e8a" stroke-width="1.15" fill="none"/>
<rect x="315" y="46" width="13" height="9.6" fill="#f6f6f6"/><rect x="336" y="69" width="13" height="10" fill="#f6f6f6"/>
<path d="M334.4 48.9Q327 45.6 321.4 50.8L319.6 48.4L316.4 55.4L324 55.2L322.6 52.6Q327.6 48.4 334.4 48.9Z" fill="#4ea2dc" stroke="#4ea2dc" stroke-width="0.9" stroke-linejoin="round"/>
<path d="M333 77.2Q340 79.6 344.6 74.4L346.4 76.6L348 69.4L340.8 70.4L342.8 72.4Q338.6 76.8 333 77.2Z" fill="#4ea2dc" stroke="#4ea2dc" stroke-width="0.9" stroke-linejoin="round"/>
<path d="M357.20 48.00H373.90L374.00 48.10V70.40Q374.00 72.00 372.40 72.00H357.20Q355.60 72.00 355.60 70.40V49.60Q355.60 48.00 357.20 48.00Z" fill="#fff" stroke="#8a7d70" stroke-width="1.1" stroke-linejoin="round"/>
<path d="M360.00 50.80H377.30L377.40 50.90V74.20Q377.40 75.80 375.80 75.80H360.00Q358.40 75.80 358.40 74.20V52.40Q358.40 50.80 360.00 50.80Z" fill="#fff" stroke="#8a7d70" stroke-width="1.1" stroke-linejoin="round"/>
<path d="M363.20 53.80H378.08L381.80 59.80V76.20Q381.80 77.80 380.20 77.80H363.20Q361.60 77.80 361.60 76.20V55.40Q361.60 53.80 363.20 53.80Z" fill="#fff" stroke="#6f6254" stroke-width="1.3" stroke-linejoin="round"/><path d="M378.08 53.80L381.80 59.80L376.28 56.56Z" fill="#54483c" stroke="#54483c" stroke-width="0.65" stroke-linejoin="round"/>
<path d="M367 62V71.6H377.6M364.4 64.6H374.6V74.2M367.4 71.2L376.6 62.4" stroke="#3f97dc" stroke-width="1" fill="none"/>
<path d="M366.60 95.30H371.00L368.80 97.70Z" fill="#505050"/>
<path d="M395.40 48.00H410.70L416.40 57.20V75.20Q416.40 76.80 414.80 76.80H395.40Q393.80 76.80 393.80 75.20V49.60Q393.80 48.00 395.40 48.00Z" fill="#fff" stroke="#6f6254" stroke-width="1.2" stroke-linejoin="round"/><path d="M410.70 48.00L416.40 57.20L407.94 52.23Z" fill="#54483c" stroke="#54483c" stroke-width="0.60" stroke-linejoin="round"/>
<rect x="393.6" y="65.4" width="11.4" height="10.6" rx="1.4" fill="#fff" stroke="#3f97dc" stroke-width="1.4"/>
<path d="M402.2 68L397.6 72.8M397 69.6V73.4H400.8" stroke="#3f97dc" stroke-width="1.4" fill="none"/>
<path d="M406 64.6L410.6 60M407.2 59.6H411V63.4" stroke="#3f97dc" stroke-width="1.4" fill="none"/>
<path d="M443.40 47.80H459.50L465.20 57.00V75.00Q465.20 76.60 463.60 76.60H443.40Q441.80 76.60 441.80 75.00V49.40Q441.80 47.80 443.40 47.80Z" fill="#fff" stroke="#6f6254" stroke-width="1.2" stroke-linejoin="round"/><path d="M459.50 47.80L465.20 57.00L456.74 52.03Z" fill="#54483c" stroke="#54483c" stroke-width="0.60" stroke-linejoin="round"/>
<path d="M445.6 72L452.2 55.2H454.4L461 72H457.8L453.3 59.4L448.8 72Z" fill="#f6a67c"/>
<path d="M445.2 59.8H462M445.2 63.6H462M445.2 67.3H462" stroke="#8d7d6c" stroke-width="0.95"/>
<path d="M452.90 95.30H457.30L455.10 97.70Z" fill="#505050"/>
<path d="M491.20 47.80H507.10L512.80 57.00V75.00Q512.80 76.60 511.20 76.60H491.20Q489.60 76.60 489.60 75.00V49.40Q489.60 47.80 491.20 47.80Z" fill="#4d97d6" stroke="#6f6254" stroke-width="1.2" stroke-linejoin="round"/><path d="M507.10 47.80L512.80 57.00L504.34 52.03Z" fill="#54483c" stroke="#54483c" stroke-width="0.60" stroke-linejoin="round"/>
<path d="M498 49.5H504.6L511.6 56.6V64Q504 60 498 62Z" fill="#82bbe8" opacity="0.75"/>
<path d="M487.2 58.4L493.4 54.4L498.4 60.6L492.2 64.8Z" fill="#5b4e42"/><path d="M489 56.6Q488.4 52 491.8 51.6Q494.6 51.6 495.2 55" stroke="#5b4e42" stroke-width="1.1" fill="none"/><path d="M498 60.4Q499.6 62 499 65" stroke="#3b3128" stroke-width="1.2" fill="none"/>
<path d="M499.60 95.30H504.00L501.80 97.70Z" fill="#505050"/>
<path d="M537.80 47.80H553.90L559.60 57.00V75.00Q559.60 76.60 558.00 76.60H537.80Q536.20 76.60 536.20 75.00V49.40Q536.20 47.80 537.80 47.80Z" fill="#fff" stroke="#6f6254" stroke-width="1.2" stroke-linejoin="round"/><path d="M553.90 47.80L559.60 57.00L551.14 52.03Z" fill="#54483c" stroke="#54483c" stroke-width="0.60" stroke-linejoin="round"/>
<path d="M538.4 52.2H551.6L557.4 58H538.4Z" fill="#fbb33a"/><rect x="538.4" y="69" width="19" height="5.4" fill="#fbb33a"/>
<path d="M541.6 60.9H554M541.6 64.9H554" stroke="#ad9e8a" stroke-width="1.2"/>
<path d="M560.40 96.20H564.80L562.60 98.60Z" fill="#505050"/>
<path d="M587.80 48.00H603.50L609.20 57.20V75.20Q609.20 76.80 607.60 76.80H587.80Q586.20 76.80 586.20 75.20V49.60Q586.20 48.00 587.80 48.00Z" fill="#fff" stroke="#6f6254" stroke-width="1.2" stroke-linejoin="round"/><path d="M603.50 48.00L609.20 57.20L600.74 52.23Z" fill="#54483c" stroke="#54483c" stroke-width="0.60" stroke-linejoin="round"/><path d="M591.30 56.00H598.40" stroke="#ad9e8a" stroke-width="1.15" fill="none"/><path d="M591.30 60.70H603.30" stroke="#ad9e8a" stroke-width="1.15" fill="none"/>
<path d="M596.4 63.4L595 72.6M600.4 63.4L599 72.6M593.4 66.4H602.4M592.8 69.8H601.8" stroke="#3f97dc" stroke-width="1.15" fill="none"/>
<path d="M618.20 96.20H622.60L620.40 98.60Z" fill="#505050"/>
<path d="M631.20 48.00H646.90L652.60 57.20V75.20Q652.60 76.80 651.00 76.80H631.20Q629.60 76.80 629.60 75.20V49.60Q629.60 48.00 631.20 48.00Z" fill="#fff" stroke="#6f6254" stroke-width="1.2" stroke-linejoin="round"/><path d="M646.90 48.00L652.60 57.20L644.14 52.23Z" fill="#54483c" stroke="#54483c" stroke-width="0.60" stroke-linejoin="round"/><path d="M634.60 56.00H641.80" stroke="#ad9e8a" stroke-width="1.15" fill="none"/><path d="M634.60 60.70H646.60" stroke="#ad9e8a" stroke-width="1.15" fill="none"/><path d="M634.60 64.70H646.60" stroke="#ad9e8a" stroke-width="1.15" fill="none"/>
<text x="633.2" y="74.2" font-size="8.4" font-weight="700" fill="#3f97dc" font-family="Liberation Sans, sans-serif" textLength="16.2" lengthAdjust="spacingAndGlyphs">1..N</text>
<path d="M8.6 61.8Q6.6 60.2 5.2 56.6Q4.4 54.6 5.4 54.2Q6.6 53.8 7.6 55.6L8.6 57V48.6Q8.6 47.4 9.6 47.4Q10.6 47.4 10.6 48.6V46.8Q10.6 45.6 11.7 45.6Q12.8 45.6 12.8 46.8V47.4Q12.8 46.4 13.9 46.4Q15 46.4 15 47.6V49Q15 48.2 16 48.2Q17.2 48.2 17.2 49.4V56.6Q17.2 60 15.4 61.8Z" fill="#fff" stroke="#7b7067" stroke-width="0.9" stroke-linejoin="round"/>
<path d="M10.7 48.8V54M12.9 47.6V54M15 49.2V54" stroke="#b0a79e" stroke-width="0.7"/>
<rect x="3" y="69" width="6.6" height="8.6" fill="#8db6ea"/><text x="3.4" y="76.6" font-family="Liberation Serif, serif" font-size="9" fill="#2f3f66">T</text>
<path d="M11.4 66.8V78.6M10.2 66.6H12.6M10.2 78.8H12.6" stroke="#666" stroke-width="0.8"/>
<path d="M13.4 69.2V79L15.6 77L17.2 80.6L18.6 80L17 76.4H19.8Z" fill="#555" stroke="#444" stroke-width="0.4"/>
<path d="M17.12 91.15L17.12 93.25L15.47 93.34L14.86 94.81L15.95 96.06L14.46 97.55L13.24 96.45L11.77 97.06L11.65 98.72L9.55 98.72L9.46 97.07L7.99 96.46L6.74 97.55L5.25 96.06L6.35 94.84L5.74 93.37L4.08 93.25L4.08 91.15L5.73 91.06L6.34 89.59L5.25 88.34L6.74 86.85L7.96 87.95L9.43 87.34L9.55 85.68L11.65 85.68L11.74 87.33L13.21 87.94L14.46 86.85L15.95 88.34L14.85 89.56L15.46 91.03Z" fill="#fff" stroke="#7d6e5f" stroke-width="1.3" stroke-linejoin="round"/><circle cx="10.6" cy="92.2" r="3.4" fill="#fff" stroke="#7d6e5f" stroke-width="1"/>
<path d="M9.4 88.6Q6.4 89.4 7 92.6Q7.8 94.8 10.6 94.2L17.8 100.6L19 99.2L11.8 92.8Q12.6 90.6 10.8 89.2L10.2 91.4L8.8 91Z" fill="#4b9ce0"/>
<path d="M69.40 92.10H73.00L71.20 94.10Z" fill="#222"/>
</svg>
<div style="left:2.5px;top:491px;width:745px;height:22.5px;background:#f6f6f6;"></div>
<svg style="left:0;top:0;" width="750" height="516" viewBox="0 0 750 516">
<rect x="3.6" y="495.0" width="1" height="1.6" fill="#e2e2e2"/><rect x="5.2" y="495.0" width="1" height="1.6" fill="#e2e2e2"/><rect x="3.6" y="497.8" width="1" height="1.6" fill="#e2e2e2"/><rect x="5.2" y="497.8" width="1" height="1.6" fill="#e2e2e2"/><rect x="3.6" y="500.6" width="1" height="1.6" fill="#e2e2e2"/><rect x="5.2" y="500.6" width="1" height="1.6" fill="#e2e2e2"/><rect x="3.6" y="503.4" width="1" height="1.6" fill="#e2e2e2"/><rect x="5.2" y="503.4" width="1" height="1.6" fill="#e2e2e2"/><path d="M3.9 507V511" stroke="#666" stroke-width="0.8"/><path d="M7.0 507L4.8 509L7.0 511Z" fill="#666"/>
<path d="M20.93 499.01L20.93 500.59L19.60 500.64L19.20 501.61L20.11 502.59L18.99 503.71L18.01 502.80L17.04 503.20L16.99 504.53L15.41 504.53L15.36 503.20L14.39 502.80L13.41 503.71L12.29 502.59L13.20 501.61L12.80 500.64L11.47 500.59L11.47 499.01L12.80 498.96L13.20 497.99L12.29 497.01L13.41 495.89L14.39 496.80L15.36 496.40L15.41 495.07L16.99 495.07L17.04 496.40L18.01 496.80L18.99 495.89L20.11 497.01L19.20 497.99L19.60 498.96Z" fill="#8a7b6b" stroke="#7b6d5e" stroke-width="0.7" stroke-linejoin="round"/><circle cx="16.2" cy="499.8" r="2" fill="#f6f6f6" stroke="#7b6d5e" stroke-width="0.5599999999999999"/>
<path d="M26.84 505.69L26.84 507.11L25.61 507.15L25.26 508.00L26.10 508.90L25.10 509.90L24.20 509.06L23.35 509.41L23.31 510.64L21.89 510.64L21.85 509.41L21.00 509.06L20.10 509.90L19.10 508.90L19.94 508.00L19.59 507.15L18.36 507.11L18.36 505.69L19.59 505.65L19.94 504.80L19.10 503.90L20.10 502.90L21.00 503.74L21.85 503.39L21.89 502.16L23.31 502.16L23.35 503.39L24.20 503.74L25.10 502.90L26.10 503.90L25.26 504.80L25.61 505.65Z" fill="#f7a52e" stroke="#f2951c" stroke-width="0.7" stroke-linejoin="round"/><circle cx="22.6" cy="506.4" r="1.7" fill="#f6f6f6" stroke="#f2951c" stroke-width="0.5599999999999999"/>
<path d="M70.50 502.55H73.50L72.00 504.25Z" fill="#333"/>
<rect x="78.0" y="495.0" width="1" height="1.6" fill="#e2e2e2"/><rect x="79.6" y="495.0" width="1" height="1.6" fill="#e2e2e2"/><rect x="78.0" y="497.8" width="1" height="1.6" fill="#e2e2e2"/><rect x="79.6" y="497.8" width="1" height="1.6" fill="#e2e2e2"/><rect x="78.0" y="500.6" width="1" height="1.6" fill="#e2e2e2"/><rect x="79.6" y="500.6" width="1" height="1.6" fill="#e2e2e2"/><rect x="78.0" y="503.4" width="1" height="1.6" fill="#e2e2e2"/><rect x="79.6" y="503.4" width="1" height="1.6" fill="#e2e2e2"/><path d="M78.3 507V511" stroke="#666" stroke-width="0.8"/><path d="M81.4 507L79.2 509L81.4 511Z" fill="#666"/>
<circle cx="93.3" cy="503.3" r="7.3" fill="#fff" stroke="#c9c2b6" stroke-width="0.9"/><path d="M90.6 499.8V506.8M96.4 499.8L92.8 503.3L96.4 506.8" stroke="#4a9fe0" stroke-width="1.3" fill="none" opacity="0.8"/>
<circle cx="112.5" cy="503.3" r="7.3" fill="#fff" stroke="#c9c2b6" stroke-width="0.9"/><path d="M114.2 499.8L110.6 503.3L114.2 506.8" stroke="#4a9fe0" stroke-width="1.3" fill="none" opacity="0.8"/>
<rect x="124.2" y="495.3" width="62" height="14.8" rx="1.8" fill="#fff" stroke="#a9a9a9" stroke-width="0.9"/>
<circle cx="196.9" cy="503.3" r="7.3" fill="#fff" stroke="#8c7f6c" stroke-width="0.9"/><path d="M195.2 499.8L198.8 503.3L195.2 506.8" stroke="#3f97dc" stroke-width="1.4" fill="none"/>
<circle cx="216.9" cy="503.3" r="7.3" fill="#fff" stroke="#8c7f6c" stroke-width="0.9"/><path d="M214 499.8L217.6 503.3L214 506.8M219.6 499.8V506.8" stroke="#3f97dc" stroke-width="1.4" fill="none"/>
<path d="M229.5 494.5V511.5" stroke="#d4d4d4" stroke-width="1"/>
<circle cx="241.5" cy="503.3" r="7.3" fill="#fff" stroke="#7f7152" stroke-width="0.9"/><path d="M245.6 503.3H237.8M240.8 500.2L237.6 503.3L240.8 506.4" stroke="#7ab51d" stroke-width="1.4" fill="none"/>
<circle cx="261.2" cy="503.3" r="7.3" fill="#fff" stroke="#cfc8ba" stroke-width="0.9"/><path d="M257.2 503.3H265M262 500.2L265.2 503.3L262 506.4" stroke="#b7d98a" stroke-width="1.4" fill="none"/>
<rect x="273.6" y="495.0" width="1" height="1.6" fill="#e2e2e2"/><rect x="275.2" y="495.0" width="1" height="1.6" fill="#e2e2e2"/><rect x="273.6" y="497.8" width="1" height="1.6" fill="#e2e2e2"/><rect x="275.2" y="497.8" width="1" height="1.6" fill="#e2e2e2"/><rect x="273.6" y="500.6" width="1" height="1.6" fill="#e2e2e2"/><rect x="275.2" y="500.6" width="1" height="1.6" fill="#e2e2e2"/><rect x="273.6" y="503.4" width="1" height="1.6" fill="#e2e2e2"/><rect x="275.2" y="503.4" width="1" height="1.6" fill="#e2e2e2"/><path d="M273.90000000000003 507V511" stroke="#666" stroke-width="0.8"/><path d="M277.0 507L274.8 509L277.0 511Z" fill="#666"/>
<rect x="279.6" y="493.8" width="18.4" height="19" rx="2" fill="#fbe39a" stroke="#c6a55c" stroke-width="1"/>
<path d="M284.03 496.20H292.17L294.40 499.80V508.37Q294.40 509.40 293.37 509.40H284.03Q283.00 509.40 283.00 508.37V497.23Q283.00 496.20 284.03 496.20Z" fill="#fff" stroke="#6f6254" stroke-width="1.1" stroke-linejoin="round"/><path d="M292.17 496.20L294.40 499.80L291.09 497.86Z" fill="#54483c" stroke="#54483c" stroke-width="0.55" stroke-linejoin="round"/>
<path d="M302.8 496V500.6H312.8V496" stroke="#857868" stroke-width="1" fill="#fff"/><path d="M302.8 510V503.4H309.8L312.8 506.2V510" stroke="#857868" stroke-width="1" fill="#fff"/><path d="M309.6 503.4L312.8 506.4L309.8 506.2Z" fill="#4b4036"/>
<path d="M320.27 498.40H324.60L327.00 500.80V506.73Q327.00 507.40 326.33 507.40H320.27Q319.60 507.40 319.60 506.73V499.07Q319.60 498.40 320.27 498.40Z" fill="#fff" stroke="#857868" stroke-width="1" stroke-linejoin="round"/>
<path d="M329.08 498.40H334.39L336.00 501.00V506.72Q336.00 507.40 335.32 507.40H329.08Q328.40 507.40 328.40 506.72V499.08Q328.40 498.40 329.08 498.40Z" fill="#fff" stroke="#857868" stroke-width="1" stroke-linejoin="round"/><path d="M334.39 498.40L336.00 501.00L333.61 499.60Z" fill="#54483c" stroke="#54483c" stroke-width="0.50" stroke-linejoin="round"/>
<path d="M340.6 496V500.6H347V496M349.4 496V500.6H355.8V496" stroke="#857868" stroke-width="1" fill="#fff"/><path d="M340.6 510V503.4H344.6L347 505.8V510M349.4 510V503.4H353.4L355.8 505.8V510" stroke="#857868" stroke-width="1" fill="#fff"/><path d="M344.4 503.4L347 506L344.6 505.8ZM353.2 503.4L355.8 506L353.4 505.8Z" fill="#4b4036"/>
<rect x="522.4" y="495.0" width="1" height="1.6" fill="#e2e2e2"/><rect x="524.0" y="495.0" width="1" height="1.6" fill="#e2e2e2"/><rect x="522.4" y="497.8" width="1" height="1.6" fill="#e2e2e2"/><rect x="524.0" y="497.8" width="1" height="1.6" fill="#e2e2e2"/><rect x="522.4" y="500.6" width="1" height="1.6" fill="#e2e2e2"/><rect x="524.0" y="500.6" width="1" height="1.6" fill="#e2e2e2"/><rect x="522.4" y="503.4" width="1" height="1.6" fill="#e2e2e2"/><rect x="524.0" y="503.4" width="1" height="1.6" fill="#e2e2e2"/><path d="M522.6999999999999 507V511" stroke="#666" stroke-width="0.8"/><path d="M525.8 507L523.6 509L525.8 511Z" fill="#666"/>
<rect x="528.8" y="495.3" width="56.4" height="15" rx="1.8" fill="#fff" stroke="#a9a9a9" stroke-width="0.9"/>
<path d="M577.10 501.65H581.70L579.40 504.15Z" fill="#444"/>
<path d="M589 494.5V511.5" stroke="#dcdcdc" stroke-width="1"/>
<defs><linearGradient id="og" x1="0.2" y1="0" x2="0.8" y2="1"><stop offset="0.45" stop-color="#fff"/><stop offset="0.55" stop-color="#fde6c4"/></linearGradient></defs>
<circle cx="601" cy="503.3" r="7.3" fill="url(#og)" stroke="#8c7f6c" stroke-width="0.9"/><path d="M597.4 503.3H604.6" stroke="#3f97dc" stroke-width="1.3"/>
<path d="M612.6 503.3H682" stroke="#8f8f8f" stroke-width="0.9"/>
<rect x="644.8" y="495.4" width="4.6" height="16" rx="1.2" fill="#fff" stroke="#9a9a9a" stroke-width="0.9"/>
<circle cx="693.5" cy="503.3" r="7.3" fill="url(#og)" stroke="#8c7f6c" stroke-width="0.9"/><path d="M689.7 503.3H697.3M693.5 499.5V507.1" stroke="#3f97dc" stroke-width="1.3"/>
<rect x="706.4" y="495.0" width="1" height="1.6" fill="#e2e2e2"/><rect x="708.0" y="495.0" width="1" height="1.6" fill="#e2e2e2"/><rect x="706.4" y="497.8" width="1" height="1.6" fill="#e2e2e2"/><rect x="708.0" y="497.8" width="1" height="1.6" fill="#e2e2e2"/><rect x="706.4" y="500.6" width="1" height="1.6" fill="#e2e2e2"/><rect x="708.0" y="500.6" width="1" height="1.6" fill="#e2e2e2"/><rect x="706.4" y="503.4" width="1" height="1.6" fill="#e2e2e2"/><rect x="708.0" y="503.4" width="1" height="1.6" fill="#e2e2e2"/><path d="M706.6999999999999 507V511" stroke="#666" stroke-width="0.8"/><path d="M709.8 507L707.6 509L709.8 511Z" fill="#666"/>
<rect x="714" y="500" width="10" height="7" rx="0.8" fill="#fbf6ea" stroke="#6fa8e0" stroke-width="1"/><path d="M713.5 499.8H724.5" stroke="#4a90d8" stroke-width="1.5"/>
<path d="M734.00 501.95H737.00L735.50 503.65Z" fill="#888"/>
<rect x="738.4" y="133.6" width="8.8" height="9" fill="#fdfdfd" stroke="#e6e6e6" stroke-width="0.5"/><path d="M740.6 139L742.8 136.8L745 139" stroke="#333" stroke-width="1.1" fill="none"/>
<rect x="738.4" y="144.2" width="8.8" height="15" rx="1" fill="#f2f2f2" stroke="#e0e0e0" stroke-width="0.5"/><path d="M741 149.4H744.8M741 151.2H744.8M741 153H744.8" stroke="#c4c4c4" stroke-width="0.9"/>
<rect x="738.4" y="481.8" width="8.8" height="9" fill="#fdfdfd" stroke="#e6e6e6" stroke-width="0.5"/><path d="M740.4 485.8H745.2L742.8 488.2Z" fill="#333"/>
<path d="M741.2 493.4H746.4L743.8 495.6Z" fill="#555"/><path d="M741.2 496.9H746.4" stroke="#555" stroke-width="0.9"/>
</svg>
<!-- dropdown menu -->
<div style="left:81.5px;top:102.5px;width:183px;height:124px;box-sizing:border-box;background:#f8f8f8;border:1px solid #959595;border-radius:2px;box-shadow:1.5px 1.5px 3px rgba(0,0,0,0.5);"></div>
<div style="left:85px;top:145.5px;width:176px;height:19px;box-sizing:border-box;border:1px solid #e6cd7a;border-radius:2px;background:linear-gradient(#fdf4cf,#fcefb5 45%,#fbe595 50%,#fdf2be);"></div>
<svg style="left:0;top:0;" width="750" height="516" viewBox="0 0 750 516">
<path d="M97.41 108.40H105.37L107.60 112.00V121.59Q107.60 122.60 106.59 122.60H97.41Q96.40 122.60 96.40 121.59V109.41Q96.40 108.40 97.41 108.40Z" fill="#fff" stroke="#6f6254" stroke-width="1" stroke-linejoin="round"/><path d="M105.37 108.40L107.60 112.00L104.29 110.06Z" fill="#54483c" stroke="#54483c" stroke-width="0.50" stroke-linejoin="round"/><path d="M98.60 112.60H102.40" stroke="#ad9e8a" stroke-width="0.9" fill="none"/><path d="M98.60 114.60H104.60" stroke="#ad9e8a" stroke-width="0.9" fill="none"/><path d="M98.60 116.60H104.60" stroke="#ad9e8a" stroke-width="0.9" fill="none"/><path d="M98.60 118.60H103.00" stroke="#ad9e8a" stroke-width="0.9" fill="none"/>
<circle cx="108.4" cy="120.1" r="4.7" fill="#fbfbf3"/><circle cx="108.4" cy="120.1" r="4" fill="#76ab33"/><path d="M108.4 117.8V122.39999999999999M106.10000000000001 120.1H110.7" stroke="#fff" stroke-width="1.35"/>
<path d="M97.41 128.00H105.37L107.60 131.60V141.19Q107.60 142.20 106.59 142.20H97.41Q96.40 142.20 96.40 141.19V129.01Q96.40 128.00 97.41 128.00Z" fill="#fff" stroke="#6f6254" stroke-width="1" stroke-linejoin="round"/><path d="M105.37 128.00L107.60 131.60L104.29 129.66Z" fill="#54483c" stroke="#54483c" stroke-width="0.50" stroke-linejoin="round"/>
<circle cx="108.4" cy="139.7" r="4.7" fill="#fbfbf3"/><circle cx="108.4" cy="139.7" r="4" fill="#76ab33"/><path d="M108.4 137.39999999999998V142.0M106.10000000000001 139.7H110.7" stroke="#fff" stroke-width="1.35"/>
<g transform="rotate(-14 101 155.2)"><rect x="96.4" y="149.2" width="11" height="9" fill="#fff" stroke="#8a7d70" stroke-width="0.8"/></g>
<g transform="rotate(10 103 155.2)"><rect x="97.4" y="149.0" width="12" height="9.6" fill="#fff" stroke="#8a7d70" stroke-width="0.8"/><rect x="98.6" y="150.2" width="9.6" height="7.2" fill="#62aee6"/><path d="M98.6 157.39999999999998L101.6 153.79999999999998L104 156.0L105.4 154.79999999999998L108.2 157.39999999999998Z" fill="#7db548"/><circle cx="105.6" cy="152.0" r="1" fill="#fbe27a"/></g>
<circle cx="108.4" cy="159.29999999999998" r="4.7" fill="#fbfbf3"/><circle cx="108.4" cy="159.29999999999998" r="4" fill="#76ab33"/><path d="M108.4 156.99999999999997V161.6M106.10000000000001 159.29999999999998H110.7" stroke="#fff" stroke-width="1.35"/>
<path d="M100.2 169.20000000000002H106.6L111.6 176.9H95.2Z" fill="#3f8fd6"/><path d="M100.4 169.4H106.4L107.8 171.60000000000002H99Z" fill="#6fb2ea"/><rect x="102" y="170.20000000000002" width="2.8" height="0.9" rx="0.4" fill="#fff"/><rect x="95.2" y="177.20000000000002" width="16.4" height="2.2" fill="#5b4e42"/>
<circle cx="108.4" cy="179.4" r="4.7" fill="#fbfbf3"/><circle cx="108.4" cy="179.4" r="4" fill="#76ab33"/><path d="M108.4 177.1V181.70000000000002M106.10000000000001 179.4H110.7" stroke="#fff" stroke-width="1.35"/>
<path d="M98.70 186.80H105.69L107.80 190.20V200.10Q107.80 201.00 106.90 201.00H98.70Q97.80 201.00 97.80 200.10V187.70Q97.80 186.80 98.70 186.80Z" fill="#fff" stroke="#6f6254" stroke-width="1" stroke-linejoin="round"/><path d="M105.69 186.80L107.80 190.20L104.67 188.36Z" fill="#54483c" stroke="#54483c" stroke-width="0.50" stroke-linejoin="round"/><path d="M100.00 196.40H104.00" stroke="#ad9e8a" stroke-width="0.9" fill="none"/><path d="M100.00 198.40H104.00" stroke="#ad9e8a" stroke-width="0.9" fill="none"/>
<rect x="95.6" y="190.0" width="10.4" height="4.4" fill="#8d8378"/><text x="96.3" y="193.5" font-size="3.6" font-weight="700" fill="#fff" font-family="Liberation Sans, sans-serif" textLength="9" lengthAdjust="spacingAndGlyphs">TXT</text>
<circle cx="108.4" cy="198.6" r="4.7" fill="#fbfbf3"/><circle cx="108.4" cy="198.6" r="4" fill="#76ab33"/><path d="M108.4 196.29999999999998V200.9M106.10000000000001 198.6H110.7" stroke="#fff" stroke-width="1.35"/>
<path d="M98.70 206.60H105.69L107.80 210.00V219.90Q107.80 220.80 106.90 220.80H98.70Q97.80 220.80 97.80 219.90V207.50Q97.80 206.60 98.70 206.60Z" fill="#fff" stroke="#6f6254" stroke-width="1" stroke-linejoin="round"/><path d="M105.69 206.60L107.80 210.00L104.67 208.16Z" fill="#54483c" stroke="#54483c" stroke-width="0.50" stroke-linejoin="round"/><path d="M100.00 216.20H104.00" stroke="#ad9e8a" stroke-width="0.9" fill="none"/><path d="M100.00 218.20H104.00" stroke="#ad9e8a" stroke-width="0.9" fill="none"/>
<rect x="95.6" y="209.8" width="10.4" height="4.4" fill="#4a9fe0"/><text x="96.3" y="213.3" font-size="3.6" font-weight="700" fill="#fff" font-family="Liberation Sans, sans-serif" textLength="9" lengthAdjust="spacingAndGlyphs">RTF</text>
<circle cx="108.4" cy="217.9" r="4.7" fill="#fbfbf3"/><circle cx="108.4" cy="217.9" r="4" fill="#76ab33"/><path d="M108.4 215.6V220.20000000000002M106.10000000000001 217.9H110.7" stroke="#fff" stroke-width="1.35"/>
</svg>

<!-- texts -->
<div class="t" style="left:13.3px;top:26.2px;font-size:8.6px;font-weight:400;color:#ffffff;letter-spacing:-0.365px;-webkit-text-stroke:0.08px;">File</div>
<div class="t" style="left:47.7px;top:26.2px;font-size:8.6px;font-weight:400;color:#1e1e1e;letter-spacing:0.016px;">Home</div>
<div class="t" style="left:83.7px;top:26.2px;font-size:8.6px;font-weight:400;color:#1e1e1e;letter-spacing:-0.296px;">View</div>
<div class="t" style="left:114.0px;top:26.2px;font-size:8.6px;font-weight:400;color:#1e1e1e;letter-spacing:0.064px;">Comment</div>
<div class="t" style="left:164.7px;top:26.2px;font-size:8.6px;font-weight:400;color:#1e1e1e;letter-spacing:-0.133px;">Protect</div>
<div class="t" style="left:203.7px;top:26.2px;font-size:8.6px;font-weight:400;color:#1e1e1e;letter-spacing:-0.191px;">Form</div>
<div class="t" style="left:236.7px;top:26.2px;font-size:8.6px;font-weight:400;color:#2a5a9a;letter-spacing:-0.322px;">Organize</div>
<div class="t" style="left:281.7px;top:26.2px;font-size:8.6px;font-weight:400;color:#1e1e1e;letter-spacing:-0.113px;">Convert</div>
<div class="t" style="left:324.0px;top:26.2px;font-size:8.6px;font-weight:400;color:#1e1e1e;letter-spacing:-0.588px;">Share</div>
<div class="t" style="left:357.0px;top:26.2px;font-size:8.6px;font-weight:400;color:#1e1e1e;letter-spacing:-0.415px;">Review</div>
<div class="t" style="left:395.7px;top:26.2px;font-size:8.6px;font-weight:400;color:#1e1e1e;letter-spacing:-0.220px;">Bookmarks</div>
<div class="t" style="left:449.7px;top:26.2px;font-size:8.6px;font-weight:400;color:#1e1e1e;letter-spacing:-0.172px;">Help</div>
<div class="t" style="left:647.4px;top:26.2px;font-size:8.6px;font-weight:400;color:#1e1e1e;letter-spacing:-0.327px;">Find...</div>
<div class="t" style="left:691.7px;top:26.2px;font-size:8.6px;font-weight:400;color:#1e1e1e;letter-spacing:-0.456px;">Search...</div>
<div class="t" style="left:362.4px;top:5.2px;font-size:8.6px;font-weight:400;color:#222;letter-spacing:-0.119px;-webkit-text-stroke:0;">Architecture - PDF-XChange Editor</div>
<div class="t" style="left:22.0px;top:47.7px;font-size:8.6px;font-weight:400;color:#1e1e1e;letter-spacing:-0.237px;">Hand</div>
<div class="t" style="left:22.0px;top:67.6px;font-size:8.6px;font-weight:400;color:#1e1e1e;letter-spacing:-0.345px;">Select Text</div>
<div class="t" style="left:22.0px;top:86.7px;font-size:8.6px;font-weight:400;color:#1e1e1e;letter-spacing:-0.163px;">Other Tools</div>
<div class="t" style="left:29.9px;top:103.2px;font-size:8.6px;font-weight:400;color:#8a8fa0;letter-spacing:-0.512px;-webkit-text-stroke:0;">Tools</div>
<div class="t" style="left:90.0px;top:81.8px;font-size:8.6px;font-weight:400;color:#1e1e1e;letter-spacing:-0.283px;">Insert</div>
<div class="t" style="left:125.4px;top:81.8px;font-size:8.6px;font-weight:400;color:#1e1e1e;letter-spacing:-0.341px;">Delete</div>
<div class="t" style="left:175.6px;top:47.5px;font-size:8.6px;font-weight:400;color:#1e1e1e;letter-spacing:-0.423px;">Extract Pages</div>
<div class="t" style="left:175.6px;top:67.4px;font-size:8.6px;font-weight:400;color:#1e1e1e;letter-spacing:-0.298px;">Move Pages</div>
<div class="t" style="left:175.6px;top:86.8px;font-size:8.6px;font-weight:400;color:#1e1e1e;letter-spacing:-0.224px;">Split</div>
<div class="t" style="left:246.6px;top:47.5px;font-size:8.6px;font-weight:400;color:#1e1e1e;letter-spacing:-0.280px;">Duplicate Pages</div>
<div class="t" style="left:246.6px;top:67.4px;font-size:8.6px;font-weight:400;color:#1e1e1e;letter-spacing:-0.484px;">Replace Pages</div>
<div class="t" style="left:246.6px;top:86.8px;font-size:8.6px;font-weight:400;color:#1e1e1e;letter-spacing:-0.517px;">Swap Pages</div>
<div class="t" style="left:320.9px;top:81.8px;font-size:8.6px;font-weight:400;color:#1e1e1e;letter-spacing:-0.238px;">Rotate</div>
<div class="t" style="left:360.8px;top:81.8px;font-size:8.6px;font-weight:400;color:#1e1e1e;letter-spacing:-0.385px;">Crop</div>
<div class="t" style="left:394.5px;top:81.8px;font-size:8.6px;font-weight:400;color:#1e1e1e;letter-spacing:-0.580px;">Resize</div>
<div class="t" style="left:340.5px;top:103.2px;font-size:8.6px;font-weight:400;color:#8a8fa0;letter-spacing:-0.506px;-webkit-text-stroke:0;">Transform Pages</div>
<div class="t" style="left:432.5px;top:81.8px;font-size:8.6px;font-weight:400;color:#1e1e1e;letter-spacing:-0.170px;">Watermarks</div>
<div class="t" style="left:479.8px;top:81.8px;font-size:8.6px;font-weight:400;color:#1e1e1e;letter-spacing:-0.157px;">Background</div>
<div class="t" style="left:527.8px;top:81.8px;font-size:8.6px;font-weight:400;color:#1e1e1e;letter-spacing:-0.272px;">Header and</div>
<div class="t" style="left:533.3px;top:91.0px;font-size:8.6px;font-weight:400;color:#1e1e1e;letter-spacing:0.026px;">Footer</div>
<div class="t" style="left:526.3px;top:103.2px;font-size:8.6px;font-weight:400;color:#8a8fa0;letter-spacing:-0.496px;-webkit-text-stroke:0;">Page Marks</div>
<div class="t" style="left:588.4px;top:81.8px;font-size:8.6px;font-weight:400;color:#1e1e1e;letter-spacing:-0.477px;">Bates</div>
<div class="t" style="left:573.2px;top:91.0px;font-size:8.6px;font-weight:400;color:#1e1e1e;letter-spacing:0.017px;">Numbering</div>
<div class="t" style="left:627.8px;top:81.8px;font-size:8.6px;font-weight:400;color:#1e1e1e;letter-spacing:0.054px;">Number</div>
<div class="t" style="left:632.5px;top:91.0px;font-size:8.6px;font-weight:400;color:#1e1e1e;letter-spacing:-0.600px;">Pages</div>
<div class="t" style="left:6.0px;top:117.4px;font-size:8.6px;font-weight:400;color:#1e1e1e;letter-spacing:-0.072px;-webkit-text-stroke:0.12px;">Architecture</div>
<div class="t" style="left:114.2px;top:110.0px;font-size:8.6px;font-weight:400;color:#1e1e1e;letter-spacing:-0.295px;-webkit-text-stroke:0.12px;">Insert Pages...</div>
<div class="t" style="left:199.7px;top:110.0px;font-size:8.6px;font-weight:400;color:#1e1e1e;letter-spacing:-0.425px;-webkit-text-stroke:0.12px;">CTRL+SHIFT+I</div>
<div class="t" style="left:114.2px;top:129.6px;font-size:8.6px;font-weight:400;color:#1e1e1e;letter-spacing:-0.255px;-webkit-text-stroke:0.12px;">Insert Empty Pages...</div>
<div class="t" style="left:114.2px;top:149.2px;font-size:8.6px;font-weight:400;color:#1e1e1e;letter-spacing:-0.215px;-webkit-text-stroke:0.12px;">Insert Images...</div>
<div class="t" style="left:114.2px;top:168.8px;font-size:8.6px;font-weight:400;color:#1e1e1e;letter-spacing:-0.306px;-webkit-text-stroke:0.12px;">Insert Scanned Pages...</div>
<div class="t" style="left:114.2px;top:188.4px;font-size:8.6px;font-weight:400;color:#1e1e1e;letter-spacing:-0.225px;-webkit-text-stroke:0.12px;">Insert Text...</div>
<div class="t" style="left:114.2px;top:208.0px;font-size:8.6px;font-weight:400;color:#1e1e1e;letter-spacing:-0.349px;-webkit-text-stroke:0.12px;">Insert RTF...</div>
<div class="t" style="left:30.0px;top:497.3px;font-size:8.6px;font-weight:400;color:#1e1e1e;letter-spacing:-0.128px;">Options...</div>
<div class="t" style="left:170.8px;top:497.2px;font-size:8.6px;font-weight:700;color:#1e1e1e;letter-spacing:-0.600px;">1</div>
<div class="t" style="left:175.4px;top:496.4px;font-size:14px;font-weight:400;color:#777;letter-spacing:0.309px;-webkit-text-stroke:0;">/</div>
<div class="t" style="left:180.7px;top:495.8px;font-size:6.8px;font-weight:400;color:#333;letter-spacing:-0.281px;-webkit-text-stroke:0.1px;">9</div>
<div class="t" style="left:531.5px;top:497.1px;font-size:8.6px;font-weight:400;color:#1e1e1e;letter-spacing:-0.600px;-webkit-text-stroke:0.1px;">100%</div>
</div></body></html>
